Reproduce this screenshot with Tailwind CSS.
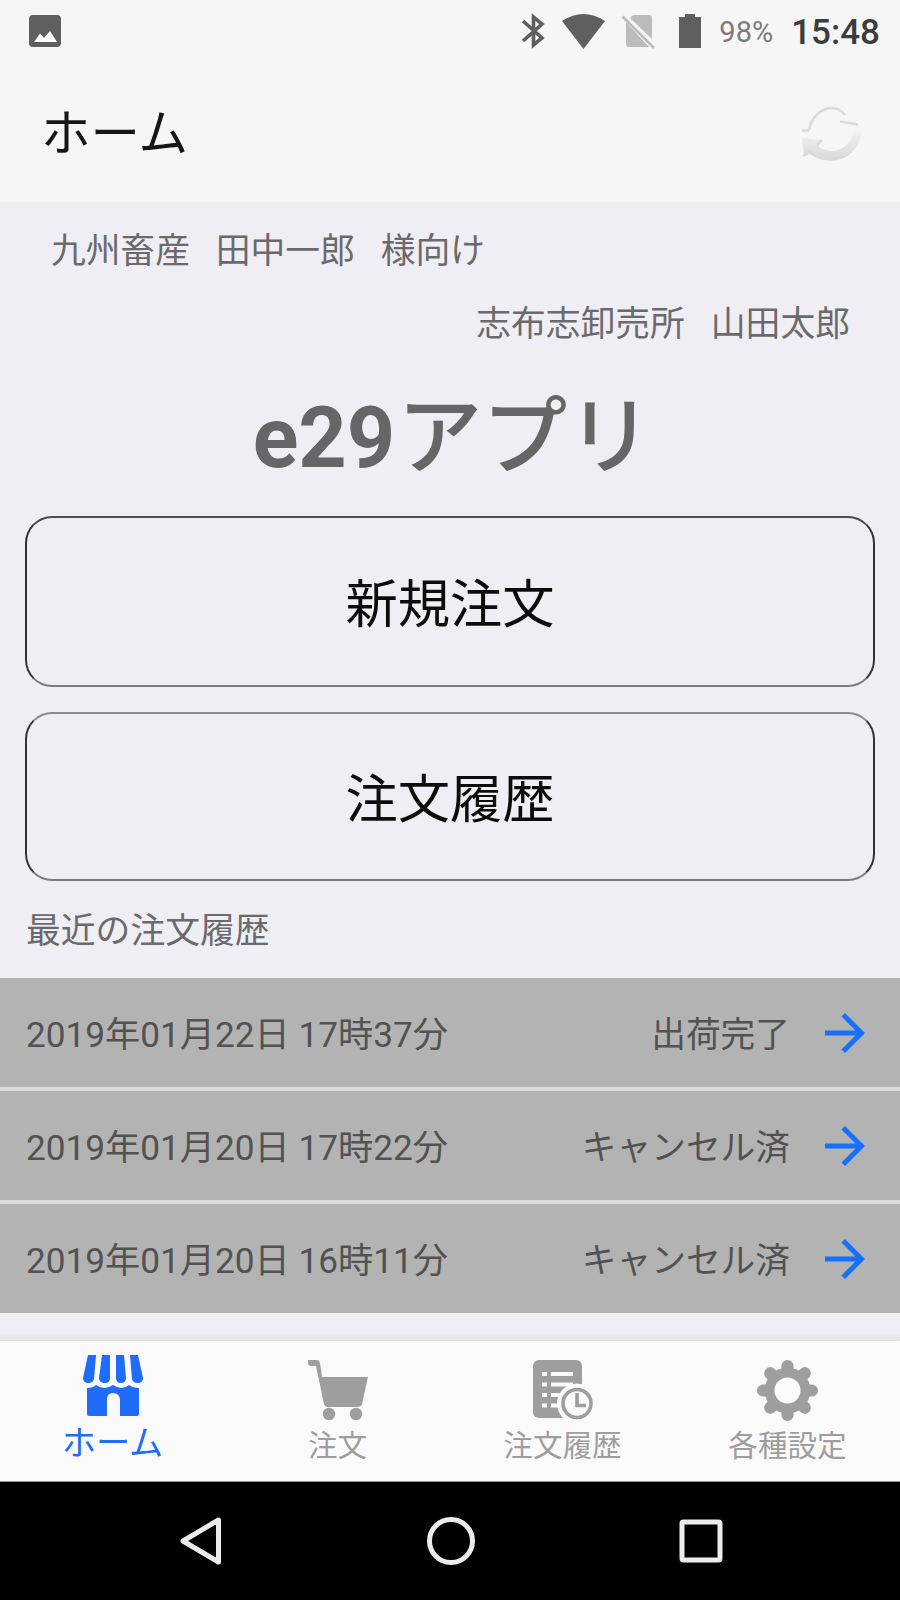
<!DOCTYPE html>
<html lang="ja">
<head>
<meta charset="utf-8">
<title>ホーム</title>
<script src="https://cdn.jsdelivr.net/npm/@tailwindcss/browser@4"></script>
</head>
<body class="bg-[#efeef4] font-['Roboto','Noto_Sans_CJK_JP',sans-serif] text-[#6a6a6d]">
<div class="flex h-[1600px] w-[900px] flex-col overflow-hidden">

  <header class="h-[202px] shrink-0 bg-[#f6f6f6]">
    <div class="flex h-[62px] items-center pl-[29px] pr-[20px]">
      <svg class="h-8 w-8" viewBox="0 0 32 32"><rect width="32" height="32" rx="4" fill="#5f5f5f"/><path d="M5 27L11 18.500L15 23L21 16L28 27Z" fill="#fff"/></svg>
      <div class="ml-auto flex items-center">
        <svg class="h-9 w-6" viewBox="0 0 24 36" fill="none" stroke="#5f5f5f" stroke-width="3.600"><path d="M2 8L21 25L12.500 32V4L21 11L2 28"/></svg>
        <svg class="ml-[16px] h-9 w-[45px]" viewBox="0 0 46 36" preserveAspectRatio="none"><path d="M1 8Q23 -6 45 8L23 36Z" fill="#5f5f5f"/></svg>
        <svg class="ml-[15px] h-9 w-[36px]" viewBox="0 0 36 36"><path d="M12 2H28Q31 2 31 5V26L9 5ZM5 9L28 34H8Q5 34 5 31Z" fill="#bcbcbc"/><path d="M1.500 3.500L33 35" stroke="#bcbcbc" stroke-width="2.500"/></svg>
        <svg class="ml-[21px] h-9 w-6" viewBox="0 0 24 36"><path d="M7 1H17V4H23V35H1V4H7Z" fill="#5f5f5f"/></svg>
        <span class="ml-[17px] pt-[2px] text-[29px] leading-[36px] text-[#7b7b7b]">98%</span>
        <span class="ml-[18px] pt-[4px] text-[35px] font-medium leading-[36px] text-[#3c3c3c]">15:48</span>
      </div>
    </div>
    <div class="flex h-[140px] items-center justify-between pl-[41px] pr-[38px]">
      <h1 class="pt-[4px] text-[49.500px] leading-[60px] text-[#161616]">ホーム</h1>
      <svg class="mt-[3px] h-[56px] w-[62px]" viewBox="0 0 62 56">
        <defs><linearGradient id="g" x1="0" y1="0" x2="0" y2="1"><stop offset="0" stop-color="#f1f1f1"/><stop offset="1" stop-color="#dadada"/></linearGradient></defs>
        <path d="M53 26L61 25C61 42 48 54 31 54C23 54 16 51 11 47L4 51L2 32L22 34L17 39C30 51 50 44 53 26Z" fill="url(#g)"/>
        <path d="M9 24C12 8 24 2 32 2C38 2 42 5 45 9M2 24.500H9M40 15.500L58 18.500M22 34L17 39M3 50L9 46C22 56 42 56 51 45" fill="none" stroke="#dadada" stroke-width="2.600"/>
      </svg>
    </div>
  </header>

  <main class="flex h-[1139px] shrink-0 flex-col">
    <p class="mt-[23px] whitespace-pre pl-[51px] text-[34.750px] leading-[52px]">九州畜産   田中一郎   様向け</p>
    <p class="mt-[21px] whitespace-pre pr-[50px] text-right text-[34.800px] leading-[52px]">志布志卸売所   山田太郎</p>
    <h2 class="mt-[28px] h-[120px] pl-[5px] text-center text-[84.500px] font-bold leading-[120px] text-[#666668]">e29<span class="ml-[2px] text-[85px] font-medium">アプリ</span></h2>
    <div class="mt-[18px] flex flex-col gap-[25px] px-[25px]">
      <button class="h-[171px] rounded-[27px] border-2 border-x-[#333335] border-t-[#4c4c50] border-b-[#7c7c80] pt-[6px] text-[52.300px] leading-[60px] text-[#0c0c0c]">新規注文</button>
      <button class="h-[169px] rounded-[27px] border-2 border-x-[#333335] border-t-[#8c8c90] border-b-[#7c7c80] pt-[6px] text-[52.300px] leading-[60px] text-[#0c0c0c]">注文履歴</button>
    </div>
    <h3 class="mt-[24px] pl-[26px] text-[34.800px] leading-[52px]">最近の注文履歴</h3>
    <ul class="mt-[21px] flex flex-col gap-[4px] bg-[#dcdcdc] text-[35.200px] text-[#525252]">
      <li class="flex h-[109px] items-center bg-[#b3b3b3] pl-[26px] pr-[25px]"><span class="pt-[6px]">2019年01月22日 17時37分</span><span class="ml-auto pt-[6px] text-[34.700px]">出荷完了</span><svg class="ml-[25px] size-[60px]" viewBox="0 0 24 24"><path d="M12 4l-1.410 1.410L16.170 11H4v2h12.170l-5.580 5.590L12 20l8-8z" fill="#1670fa"/></svg></li>
      <li class="flex h-[109px] items-center bg-[#b3b3b3] pl-[26px] pr-[25px]"><span class="pt-[6px]">2019年01月20日 17時22分</span><span class="ml-auto pt-[6px] text-[34.700px]">キャンセル済</span><svg class="ml-[25px] size-[60px]" viewBox="0 0 24 24"><path d="M12 4l-1.410 1.410L16.170 11H4v2h12.170l-5.580 5.590L12 20l8-8z" fill="#1670fa"/></svg></li>
      <li class="flex h-[109px] items-center bg-[#b3b3b3] pl-[26px] pr-[25px]"><span class="pt-[6px]">2019年01月20日 16時11分</span><span class="ml-auto pt-[6px] text-[34.700px]">キャンセル済</span><svg class="ml-[25px] size-[60px]" viewBox="0 0 24 24"><path d="M12 4l-1.410 1.410L16.170 11H4v2h12.170l-5.580 5.590L12 20l8-8z" fill="#1670fa"/></svg></li>
    </ul>
    <div class="mt-auto h-[7px] bg-linear-to-b from-[#ebeaf0] to-[#e3e2e7]"></div>
  </main>

  <nav class="grid h-[141px] shrink-0 grid-cols-4 border-b border-[#999] bg-[#fafafa] text-[29.600px] leading-[44px] text-[#9e9e9e]">
    <a class="flex flex-col items-center pt-[14px] text-[34.200px] text-[#1f6cf9]">
      <svg class="h-[61px] w-[60px]" viewBox="0 0 60 61" fill="#1f6cf9"><path d="M5 0H13L11 24Q10 28 5.500 28Q0 28 0 23ZM19 0H27V23Q27 28 22 28Q16 28 16 23ZM33 0H41L43 23Q43 28 38 28Q33 28 33 23ZM47 0H55L60 23Q60 28 54.500 28Q50 28 49 24Z"/><path d="M4 33Q10 33 13 30Q21 36 30 30Q39 36 46 30Q50 33 56 33V59Q56 61 54 61H37V44Q36 38 30 38Q24 38 24 44V61H6Q4 61 4 59Z"/></svg>
      <span class="mt-[5px]">ホーム</span>
    </a>
    <a class="flex flex-col items-center pt-[19px]">
      <svg class="size-[60px]" viewBox="0 0 60 60" fill="#9e9e9e"><path d="M0 0H9Q11 0 12 3L14 17H60L54 44Q53 47 50 47H20Q17 47 16 44L8 6H3Q0 6 0 3Z"/><circle cx="21" cy="54" r="6.200"/><circle cx="48" cy="54" r="6.200"/></svg>
      <span class="mt-[4px]">注文</span>
    </a>
    <a class="flex flex-col items-center pt-[19px]">
      <svg class="size-[60px]" viewBox="0 0 60 60"><rect width="49" height="58" rx="6" fill="#9e9e9e"/><path d="M9 14H14M18 14H40M9 24.500H14M18 24.500H40M9 35H14M18 35H33M9 45.500H14M18 45.500H26" stroke="#fafafa" stroke-width="4"/><circle cx="44" cy="43.500" r="20" fill="#fafafa"/><circle cx="44" cy="43.500" r="14" fill="none" stroke="#9e9e9e" stroke-width="3.600"/><path d="M44 33V45.500H53" fill="none" stroke="#9e9e9e" stroke-width="3.600"/></svg>
      <span class="mt-[4px]">注文履歴</span>
    </a>
    <a class="flex flex-col items-center pt-[19px]">
      <svg class="size-[61px]" viewBox="0 0 60 60"><g stroke="#9e9e9e" stroke-width="12" stroke-linecap="round"><path d="M30 6V14M30 46V54M6 30H14M46 30H54M13 13L19 19M41 41L47 47M13 47L19 41M41 19L47 13"/></g><circle cx="30" cy="30" r="22.500" fill="#9e9e9e"/><circle cx="30" cy="30" r="12.800" fill="#fafafa"/></svg>
      <span class="mt-[3px]">各種設定</span>
    </a>
  </nav>

  <footer class="flex flex-1 items-center justify-between bg-black pl-[179px] pr-[177px]">
    <svg class="h-[50px] w-[44px]" viewBox="0 0 44 50"><path d="M4 25L39.500 4V46Z" fill="none" stroke="#ececec" stroke-width="5" stroke-linejoin="round"/></svg>
    <svg class="size-[50px]" viewBox="0 0 50 50"><circle cx="25" cy="25" r="21.500" fill="none" stroke="#ececec" stroke-width="5"/></svg>
    <svg class="size-[44px]" viewBox="0 0 44 44"><rect x="3" y="3" width="38" height="38" rx="1.500" fill="none" stroke="#ececec" stroke-width="5"/></svg>
  </footer>
</div>
</body>
</html>
